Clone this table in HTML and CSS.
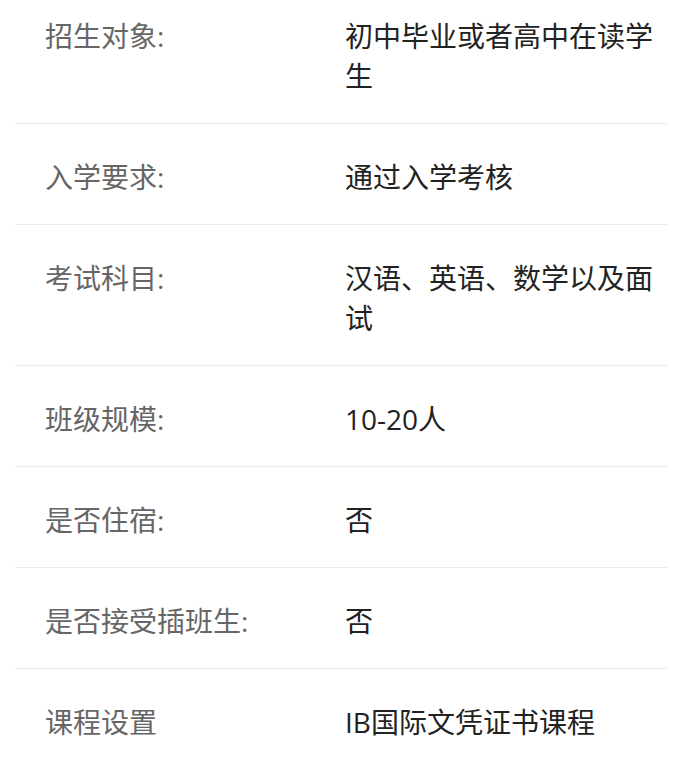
FILE: index.html
```html
<!DOCTYPE html>
<html lang="zh-CN">
<head>
<meta charset="utf-8">
<link rel="stylesheet" href="styles.css">
</head>
<body>
<div class="info-list">
  <div class="row">
    <div class="label">招生对象:</div>
    <div class="value">初中毕业或者高中在读学生</div>
  </div>
  <div class="row">
    <div class="label">入学要求:</div>
    <div class="value">通过入学考核</div>
  </div>
  <div class="row">
    <div class="label">考试科目:</div>
    <div class="value">汉语、英语、数学以及面试</div>
  </div>
  <div class="row">
    <div class="label">班级规模:</div>
    <div class="value">10-20人</div>
  </div>
  <div class="row">
    <div class="label">是否住宿:</div>
    <div class="value">否</div>
  </div>
  <div class="row">
    <div class="label">是否接受插班生:</div>
    <div class="value">否</div>
  </div>
  <div class="row">
    <div class="label">课程设置</div>
    <div class="value">IB国际文凭证书课程</div>
  </div>
</div>
</body>
</html>
```
FILE: styles.css
```css
html, body {
  margin: 0;
  padding: 0;
  background: #fff;
}
body {
  font-family: "Open Sans", "Noto Sans CJK SC", sans-serif;
  font-size: 28px;
  line-height: 40px;
}
.info-list {
  margin: 0 13px 0 15px;
}
.row {
  display: grid;
  grid-template-columns: 300px 1fr;
  padding: 33px 10px 27px 30px;
  border-bottom: 1px solid #ececec;
}
.row:first-child {
  padding-top: 16px;
}
.row:last-child {
  border-bottom: none;
}
.label {
  color: #666;
}
.value {
  color: #222;
}
```
